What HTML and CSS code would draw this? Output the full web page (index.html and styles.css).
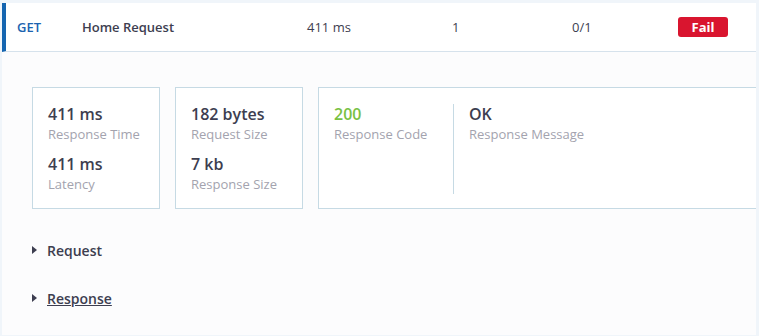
FILE: index.html
```html
<!DOCTYPE html>
<html lang="en">
<head>
  <meta charset="UTF-8">
  <title>Request result</title>
  <link rel="stylesheet" href="styles.css">
</head>
<body>
  <div class="result">
    <div class="row">
      <div class="method">GET</div>
      <div class="name">Home Request</div>
      <div>411 ms</div>
      <div>1</div>
      <div>0/1</div>
      <div><span class="badge">Fail</span></div>
    </div>
    <div class="details">
      <div class="cards">
        <div class="card">
          <div class="stat">
            <div class="value">411 ms</div>
            <div class="label">Response Time</div>
          </div>
          <div class="stat">
            <div class="value">411 ms</div>
            <div class="label">Latency</div>
          </div>
        </div>
        <div class="card">
          <div class="stat">
            <div class="value">182 bytes</div>
            <div class="label">Request Size</div>
          </div>
          <div class="stat">
            <div class="value">7 kb</div>
            <div class="label">Response Size</div>
          </div>
        </div>
        <div class="card wide">
          <div class="col">
            <div class="value ok">200</div>
            <div class="label">Response Code</div>
          </div>
          <div class="col divided">
            <div class="value">OK</div>
            <div class="label">Response Message</div>
          </div>
        </div>
      </div>
      <div class="toggle"><span class="caret"></span>Request</div>
      <div class="toggle"><span class="caret"></span><u>Response</u></div>
    </div>
  </div>
</body>
</html>
```

FILE: styles.css
```css
body {
  margin: 0;
  background: #f0f5fa;
  font-family: "Open Sans", "Liberation Sans", sans-serif;
  color: #3d3e50;
}
.result {
  margin: 3px 3px 0 2px;
}
.row {
  display: grid;
  grid-template-columns: 65px 225px 145px 120px 106px auto;
  align-items: center;
  height: 48px;
  padding-left: 11px;
  background: #fff;
  border-left: 4px solid #1565b0;
  border-bottom: 1px solid #d6e2ec;
  font-size: 13px;
}
.method {
  color: #1c63b0;
  font-weight: 600;
}
.name {
  font-weight: 600;
}
.badge {
  display: inline-block;
  width: 50px;
  height: 20px;
  line-height: 20px;
  border-radius: 3px;
  background: #d9152f;
  color: #fff;
  font-weight: 700;
  text-align: center;
}
.details {
  background: #fcfcfd;
  padding: 35px 0 0 30px;
  overflow: hidden;
  height: 283px;
  box-sizing: border-box;
}
.cards {
  display: flex;
  gap: 15px;
  margin-bottom: 31px;
}
.card {
  width: 95px;
  padding: 16px 16px 14px 15px;
  background: #fff;
  border: 1px solid #c6dae4;
  display: flex;
  flex-direction: column;
  gap: 10px;
  flex-shrink: 0;
}
.card.wide {
  width: 460px;
  flex-direction: row;
  gap: 0;
}
.col {
  width: 119px;
}
.col.divided {
  border-left: 1px solid #c6dae4;
  padding-left: 15px;
}
.value {
  font-size: 16px;
  font-weight: 600;
  line-height: 20px;
}
.value.ok {
  color: #79c143;
}
.label {
  font-size: 13px;
  line-height: 20px;
  color: #a3a3ae;
}
.toggle {
  display: flex;
  align-items: center;
  height: 20px;
  font-size: 14px;
  font-weight: 600;
  margin-bottom: 28px;
}
.caret {
  width: 0;
  height: 0;
  border-top: 4px solid transparent;
  border-bottom: 4px solid transparent;
  border-left: 5px solid #3d3e50;
  margin-right: 10px;
}
```
